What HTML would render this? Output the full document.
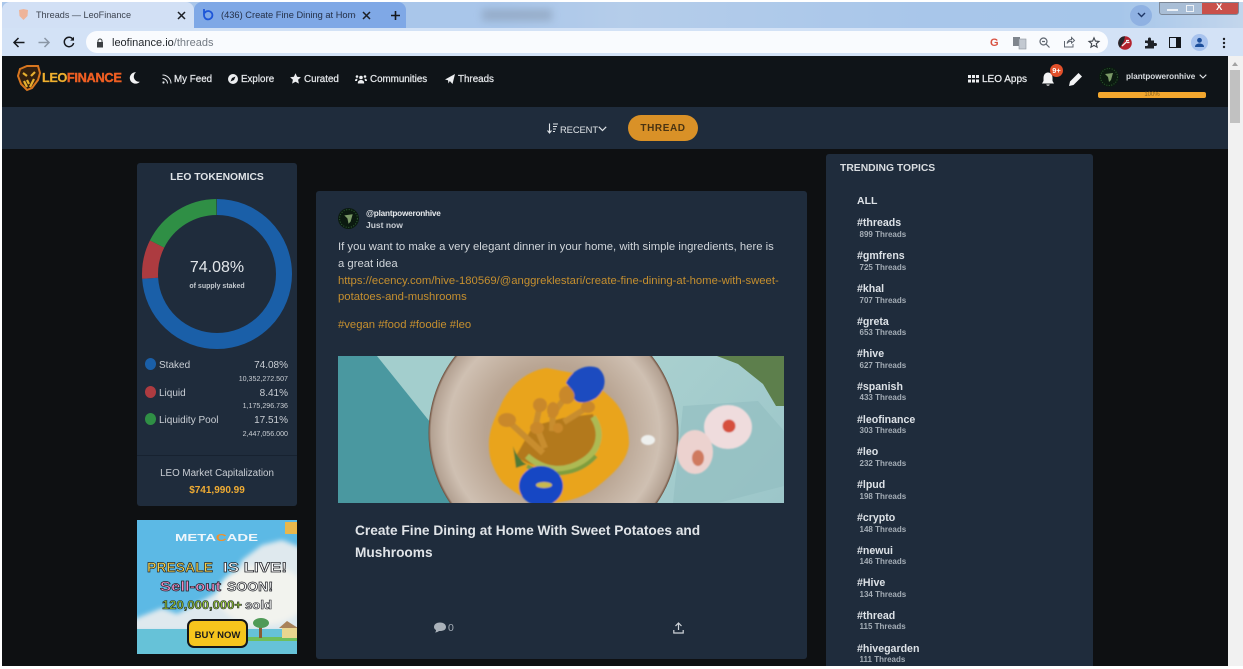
<!DOCTYPE html>
<html><head><meta charset="utf-8"><title>Threads — LeoFinance</title>
<style>
*{box-sizing:border-box}
html,body{margin:0;padding:0;width:1243px;height:669px;overflow:hidden;background:#fff}
body{font-family:"Liberation Sans",sans-serif;position:relative}
#w{position:absolute;left:0;top:0;width:1243px;height:669px;overflow:hidden;filter:blur(.3px)}
.a{position:absolute;white-space:nowrap}
.nav{top:72px;font-size:9.8px;color:#e4e7ea;line-height:14px;-webkit-text-stroke:.25px #e4e7ea;transform:translateY(1px)}
.tag{left:857px;font-size:10.6px;font-weight:bold;color:#dde2e7;line-height:14px;transform:translateY(1px)}
.cnt{left:859.5px;font-size:8px;font-weight:bold;color:#a4adb6;line-height:10px;transform:translateY(1px)}
.k{font-size:10px;color:#c9ced4;line-height:13px;transform:translateY(1px)}
.s{font-size:7.1px;color:#c9ced4;line-height:10px;text-align:right;right:955px;transform:translateY(1px)}
.body{left:338px;font-size:11.3px;line-height:16px;color:#d0d5da;transform:translateY(1px)}
.or{color:#c58f2f}
svg{position:absolute;overflow:visible}
</style></head><body><div id="w">

<!-- chrome tabs -->
<div class="a" style="left:2px;top:2px;width:1241px;height:26px;background:linear-gradient(90deg,#a9c6ea 0,#a9c6ea 40%,#b5cdea 50%,#a8c6ea 75%,#a6c6ea 90%,#c3d6ec 100%)"></div>
<div class="a" style="left:482px;top:9px;width:70px;height:12px;background:#8ea3bd;opacity:.7;filter:blur(4px)"></div>
<div class="a" style="left:2px;top:2px;width:192px;height:26px;background:#d2e0f5;border-radius:8px 8px 0 0"></div>
<div class="a" style="left:194px;top:2px;width:212px;height:26px;background:#7fa8e6;border-radius:8px 8px 0 0"></div>
<svg style="left:17px;top:8px" width="13" height="13" viewBox="0 0 13 13"><path d="M2 2 L6.5 1 L11 2 L10.5 8 L6.5 12 L2.500 8Z" fill="#eeb49a"/></svg>
<div class="a" style="left:36px;top:8px;font-size:9.1px;line-height:14px;color:#3c4350">Threads — LeoFinance</div>
<svg style="left:177px;top:11px" width="9" height="9" viewBox="0 0 9 9"><path d="M1 1L8 8M8 1L1 8" stroke="#1c2026" stroke-width="1.5"/></svg>
<svg style="left:201px;top:7px" width="14" height="14" viewBox="0 0 14 14"><path d="M3 2V8A4.200 4.200 0 1 0 7 4C5.500 4 4.500 4.800 3.500 6" fill="none" stroke="#1d55d8" stroke-width="1.800"/></svg>
<div class="a" style="left:221px;top:8px;width:135px;overflow:hidden;font-size:9.3px;line-height:14px;color:#243048">(436) Create Fine Dining at Home</div>
<svg style="left:362px;top:11px" width="9" height="9" viewBox="0 0 9 9"><path d="M1 1L8 8M8 1L1 8" stroke="#1c2026" stroke-width="1.500"/></svg>
<svg style="left:390px;top:10px" width="11" height="11" viewBox="0 0 11 11"><path d="M5.500 1V10M1 5.500H10" stroke="#15181d" stroke-width="1.600"/></svg>
<div class="a" style="left:1130px;top:5px;width:22px;height:21px;border-radius:50%;background:#8fb1e2"></div>
<svg style="left:1137px;top:12px" width="9" height="6" viewBox="0 0 9 6"><path d="M1 1L4.500 4.500L8 1" fill="none" stroke="#1f3767" stroke-width="1.400"/></svg>
<div class="a" style="left:1159px;top:2px;width:80px;height:13px;border:1px solid #7c8898;border-radius:0 0 3px 3px;background:linear-gradient(90deg,#a9bed6 0,#a9bed6 54%,#c9504a 54%,#c9504a 100%)"></div>
<div class="a" style="left:1167px;top:9px;width:11px;height:2px;background:#eef2f7"></div>
<div class="a" style="left:1186px;top:5px;width:8px;height:7px;border:1px solid #eef2f7"></div>
<div class="a" style="left:1216px;top:2px;font-size:9.500px;font-weight:bold;color:#fff;line-height:12px">X</div>

<!-- toolbar -->
<div class="a" style="left:2px;top:28px;width:1241px;height:28px;background:#d3e2f6"></div>
<div class="a" style="left:86px;top:31px;width:1022px;height:22px;background:#f9fbfe;border-radius:11px"></div>
<svg style="left:13px;top:37px" width="12" height="11" viewBox="0 0 12 11"><path d="M11.500 5.500H1.500M5.500 1L1 5.500L5.500 10" fill="none" stroke="#16191e" stroke-width="1.500"/></svg>
<svg style="left:38px;top:37px" width="12" height="11" viewBox="0 0 12 11"><path d="M.5 5.500H10.500M6.500 1L11 5.500L6.500 10" fill="none" stroke="#8b97a6" stroke-width="1.500"/></svg>
<svg style="left:63px;top:36px" width="12" height="12" viewBox="0 0 12 12"><path d="M10 3.500A4.700 4.700 0 1 0 10.600 7" fill="none" stroke="#16191e" stroke-width="1.500"/><path d="M11 .8V4.600H7.200Z" fill="#16191e"/></svg>
<svg style="left:96px;top:38px" width="8" height="10" viewBox="0 0 8 10"><path d="M2 4V3A2 2 0 0 1 6 3V4" fill="none" stroke="#3c4043"/><rect x="1" y="4" width="6" height="5.500" fill="#3c4043"/></svg>
<div class="a" style="left:112px;top:36px;font-size:11px;line-height:14px;color:#23272c">leofinance.io<span style="color:#737a83">/threads</span></div>
<div class="a" style="left:990px;top:36px;font-size:11px;font-weight:bold;line-height:14px;color:#d8503f">G</div>
<svg style="left:1013px;top:37px" width="13" height="12" viewBox="0 0 13 12"><rect x="0" y="0" width="7" height="9" fill="#7f858d"/><rect x="6" y="2" width="7" height="10" fill="#c3c9d1" stroke="#8d939b" stroke-width=".6"/></svg>
<svg style="left:1039px;top:37px" width="11" height="11" viewBox="0 0 11 11"><circle cx="4.500" cy="4.500" r="3.500" fill="none" stroke="#5f6670" stroke-width="1.200"/><path d="M7 7L10.500 10.500M3 4.500H6" stroke="#5f6670" stroke-width="1.200"/></svg>
<svg style="left:1063px;top:36px" width="12" height="12" viewBox="0 0 12 12"><path d="M1.500 5V11H10V8M4 7.500C4.500 5 6.500 3.500 8.500 3.500V1.500L11.500 4.500L8.500 7V5.300C6.500 5.300 5 6 4 7.500Z" fill="none" stroke="#5f6670"/></svg>
<svg style="left:1088px;top:37px" width="12" height="11" viewBox="0 0 12 11"><path d="M6 .8L7.400 4.100L11 4.400L8.300 6.700L9.100 10.200L6 8.400L2.900 10.200L3.700 6.700L1 4.400L4.600 4.100Z" fill="none" stroke="#3f454d" stroke-width="1.100"/></svg>
<svg style="left:1118px;top:36px" width="14" height="14" viewBox="0 0 14 14"><circle cx="7" cy="7" r="6.800" fill="#b3232e"/><path d="M7 .2A6.800 6.800 0 0 0 2 11.600L6 5Z" fill="#23262b"/><path d="M4 10L9 5.500M8 4.500H11M9 6.500H11.500" stroke="#f4f4f4" stroke-width="1.300"/></svg>
<svg style="left:1144px;top:37px" width="12" height="12" viewBox="0 0 12 12"><path d="M1 3.500H4V2A1.500 1.500 0 0 1 7 2V3.500H10V6H11.500A1.500 1.500 0 0 1 11.500 9H10V11.500H1V9H2.500A1.500 1.500 0 0 0 2.500 6H1Z" fill="#1e2228"/></svg>
<div class="a" style="left:1169px;top:37px;width:12px;height:11px;border:1.500px solid #14171b;border-right-width:5px"></div>
<div class="a" style="left:1191px;top:34px;width:17px;height:17px;border-radius:50%;background:#a8c3ee"></div>
<svg style="left:1194px;top:37px" width="11" height="11" viewBox="0 0 11 11"><circle cx="5.500" cy="3.300" r="2.400" fill="#1d4f9c"/><path d="M1 10C1 7.500 3 6.500 5.500 6.500S10 7.500 10 10Z" fill="#1d4f9c"/></svg>
<svg style="left:1222px;top:37px" width="4" height="12" viewBox="0 0 4 12"><circle cx="2" cy="2" r="1.200" fill="#1b1e23"/><circle cx="2" cy="6" r="1.200" fill="#1b1e23"/><circle cx="2" cy="10" r="1.200" fill="#1b1e23"/></svg>

<!-- page base -->
<div class="a" style="left:2px;top:56px;width:1226px;height:610px;background:#0e1012"></div>
<div class="a" style="left:2px;top:56px;width:1226px;height:51px;background:#0f1418"></div>
<div class="a" style="left:2px;top:107px;width:1226px;height:42px;background:#1f2c3c"></div>
<div class="a" style="left:1228px;top:56px;width:15px;height:610px;background:#f1f1f1"></div>
<div class="a" style="left:1230px;top:70px;width:10px;height:53px;background:#c1c1c1"></div>
<svg style="left:1232px;top:62px" width="6" height="4" viewBox="0 0 6 4"><path d="M3 0L6 4H0Z" fill="#a3a3a3"/></svg>

<!-- logo + nav -->
<svg style="left:16px;top:64px" width="25" height="27" viewBox="0 0 25 27"><path d="M4 5L11 2L22 2L24 9L22 16L16 24L11 26L5 20L2 12Z" fill="#33200f" stroke="#d8761f" stroke-width="2"/><path d="M7 9L11 12M19 8L15 12M11 16L13 20M8 17L11 23M18 15L14 23" stroke="#e7b02f" stroke-width="2.200"/></svg>
<div class="a" style="left:42px;top:70px;font-size:12.800px;font-weight:bold;line-height:16px;color:#f0b02e;letter-spacing:-.5px;-webkit-text-stroke:.2px #f0b02e">LEO<span style="color:#ee5e22;letter-spacing:-.3px;-webkit-text-stroke:.4px #ee5e22">FINANCE</span></div>
<svg style="left:130px;top:72px" width="10" height="12" viewBox="0 0 10 12"><path d="M6 .3A5.700 5.700 0 1 0 9.800 9.700A5.200 5.200 0 0 1 6 .3Z" fill="#f2f3f4"/></svg>
<svg style="left:162px;top:74px" width="10" height="10" viewBox="0 0 10 10"><circle cx="1.500" cy="8.500" r="1.100" fill="#e4e7ea"/><path d="M.5 4.500A5 5 0 0 1 5.500 9.500M.5 1A8.500 8.500 0 0 1 9 9.500" fill="none" stroke="#e4e7ea"/></svg>
<div class="a nav" style="left:174px">My Feed</div>
<svg style="left:228px;top:74px" width="10" height="10" viewBox="0 0 10 10"><circle cx="5" cy="5" r="5" fill="#eceef0"/><path d="M7.500 2.500L6 6L2.500 7.500L4 4Z" fill="#0f1418"/></svg>
<div class="a nav" style="left:241px">Explore</div>
<svg style="left:290px;top:73px" width="11" height="11" viewBox="0 0 11 11"><path d="M5.500 .3L7.100 3.800L10.900 4.200L8.100 6.800L8.900 10.600L5.500 8.700L2.100 10.600L2.900 6.800L.1 4.200L3.900 3.800Z" fill="#eceef0"/></svg>
<div class="a nav" style="left:304px">Curated</div>
<svg style="left:355px;top:74px" width="12" height="10" viewBox="0 0 12 10"><circle cx="6" cy="3.500" r="1.800" fill="#eceef0"/><circle cx="2" cy="2.500" r="1.300" fill="#eceef0"/><circle cx="10" cy="2.500" r="1.300" fill="#eceef0"/><path d="M2.800 9.500C2.800 7 4 6 6 6S9.200 7 9.200 9.500ZM0 7C0 5 1 4.500 2.500 4.800L2 7ZM12 7C12 5 11 4.500 9.500 4.800L10 7Z" fill="#eceef0"/></svg>
<div class="a nav" style="left:370px">Communities</div>
<svg style="left:445px;top:74px" width="10" height="10" viewBox="0 0 10 10"><path d="M10 0L7.500 10L4.800 7L3.500 9.500L3 6.200L0 5.500Z" fill="#eceef0"/></svg>
<div class="a nav" style="left:458px">Threads</div>

<!-- nav right -->
<svg style="left:968px;top:75px" width="11" height="8" viewBox="0 0 11 8"><path d="M0 0h3v3H0zM4 0h3v3H4zM8 0h3v3H8zM0 4.500h3v3H0zM4 4.500h3v3H4zM8 4.500h3v3H8z" fill="#eceef0"/></svg>
<div class="a nav" style="left:982px;font-size:10px;color:#eceef0">LEO Apps</div>
<svg style="left:1041px;top:72px" width="14" height="15" viewBox="0 0 14 15"><path d="M7 0.500C4 .5 2.500 3 2.500 6V9L1 11.500H13L11.500 9V6C11.500 3 10 .5 7 .5ZM5.200 12.500A1.900 1.900 0 0 0 8.800 12.500Z" fill="#f3f4f5"/></svg>
<div class="a" style="left:1050px;top:64px;width:13px;height:13px;border-radius:50%;background:#e2502a;color:#fff;font-size:7.500px;font-weight:bold;text-align:center;line-height:13px">9+</div>
<svg style="left:1069px;top:72px" width="14" height="14" viewBox="0 0 14 14"><path d="M0 14L1 9.500L9.500 1L13 4.500L4.500 13Z" fill="#f3f4f5"/></svg>
<svg style="left:1099px;top:67px" width="20" height="20" viewBox="0 0 20 20"><circle cx="10" cy="10" r="10" fill="#0b1a10"/><circle cx="10" cy="10" r="8.500" fill="none" stroke="#2c5a30" stroke-dasharray="1 1.500"/><path d="M6 7L14 6L12 13L10 15L9 10Z" fill="#7b9a67"/></svg>
<div class="a" style="left:1126px;top:70px;font-size:8.100px;font-weight:bold;line-height:13px;color:#d9dde1">plantpoweronhive</div>
<svg style="left:1199px;top:74px" width="8" height="5" viewBox="0 0 8 5"><path d="M.7 .7L4 4L7.300 .7" fill="none" stroke="#e4e7ea" stroke-width="1.100"/></svg>
<div class="a" style="left:1098px;top:92px;width:108px;height:6px;border-radius:2px;background:#f3a72e;color:#8a6420;font-size:6px;line-height:6px;text-align:center">100%</div>

<!-- sub bar -->
<svg style="left:547px;top:123px" width="11" height="11" viewBox="0 0 11 11"><path d="M2.500 .5V9.500M.5 7.500L2.500 10L4.500 7.500" fill="none" stroke="#dfe3e7" stroke-width="1.100"/><path d="M6 1H11M6 3.500H10M6 6H9M6 8.500H8" stroke="#dfe3e7"/></svg>
<div class="a" style="left:560px;top:123px;font-size:9.400px;line-height:14px;color:#dfe3e7;letter-spacing:-.1px">RECENT</div>
<svg style="left:598px;top:126px" width="9" height="6" viewBox="0 0 9 6"><path d="M.8 .8L4.500 4.500L8.200 .8" fill="none" stroke="#dfe3e7" stroke-width="1.200"/></svg>
<div class="a" style="left:628px;top:115px;width:70px;height:26px;border-radius:13px;background:#d99127;color:#4a3412;font-size:10px;font-weight:bold;text-align:center;line-height:28px;letter-spacing:.6px">THREAD</div>

<!-- tokenomics -->
<div class="a" style="left:137px;top:163px;width:160px;height:343px;background:#1f2c3c;border-radius:3px"></div>
<div class="a" style="left:137px;top:455px;width:160px;height:1px;background:#172230"></div>
<div class="a" style="left:137px;top:171px;width:160px;text-align:center;font-size:10.300px;font-weight:bold;line-height:14px;color:#dfe3e7">LEO TOKENOMICS</div>
<svg style="left:142px;top:199px" width="150" height="150" viewBox="0 0 150 150">
<g transform="rotate(-90 75 75)" fill="none" stroke-width="16">
<circle cx="75" cy="75" r="67" pathLength="100" stroke="#1a5fa8" stroke-dasharray="74.08 100"/>
<circle cx="75" cy="75" r="67" pathLength="100" stroke="#ad3b40" stroke-dasharray="8.41 100" stroke-dashoffset="-74.08"/>
<circle cx="75" cy="75" r="67" pathLength="100" stroke="#2f8f45" stroke-dasharray="17.51 100" stroke-dashoffset="-82.49"/>
</g></svg>
<div class="a" style="left:137px;top:258px;width:160px;text-align:center;font-size:16px;line-height:20px;color:#e2e6ea">74.08%</div>
<div class="a" style="left:137px;top:282px;width:160px;text-align:center;font-size:7px;font-weight:bold;line-height:10px;color:#c3c9cf">of supply staked</div>
<div class="a" style="left:145px;top:358px;width:11px;height:12px;border-radius:50%;background:#1a5fa8"></div>
<div class="a" style="left:145px;top:386px;width:11px;height:12px;border-radius:50%;background:#ad3b40"></div>
<div class="a" style="left:145px;top:413px;width:11px;height:12px;border-radius:50%;background:#2f8f45"></div>
<div class="a k" style="left:159px;top:358px">Staked</div>
<div class="a k" style="left:159px;top:386px">Liquid</div>
<div class="a k" style="left:159px;top:413px">Liquidity Pool</div>
<div class="a k" style="right:955px;top:358px">74.08%</div>
<div class="a k" style="right:955px;top:386px">8.41%</div>
<div class="a k" style="right:955px;top:413px">17.51%</div>
<div class="a s" style="top:373px">10,352,272.507</div>
<div class="a s" style="top:400px">1,175,296.736</div>
<div class="a s" style="top:428px">2,447,056.000</div>
<div class="a" style="left:137px;top:467px;width:160px;text-align:center;font-size:9.800px;line-height:13px;color:#c9ced4">LEO Market Capitalization</div>
<div class="a" style="left:137px;top:484px;width:160px;text-align:center;font-size:10px;font-weight:bold;line-height:13px;color:#f0ac33">$741,990.99</div>

<!-- ad -->
<svg style="left:137px;top:520px" width="160" height="134" viewBox="0 0 160 134" font-family="Liberation Sans, sans-serif" font-weight="bold">
<defs><clipPath id="ac"><rect width="160" height="134"/></clipPath><filter id="cb"><feGaussianBlur stdDeviation="2.500"/></filter></defs>
<g clip-path="url(#ac)">
<rect width="160" height="134" fill="#5cb9e5"/>
<g filter="url(#cb)">
<path d="M-5 100L25 88L40 94L70 78L95 62L105 40L125 25L145 20L165 28V112H-5Z" fill="#dfe9ee"/>
<ellipse cx="125" cy="75" rx="45" ry="30" fill="#f2f3ee"/>
</g>
<rect y="109" width="160" height="25" fill="#66c2d8"/>
<rect x="108" y="117" width="52" height="4" fill="#6fbf5c"/>
<rect x="145" y="108" width="15" height="10" fill="#e9d68f"/>
<path d="M142 108L150 101L161 108Z" fill="#a8825a"/>
<rect x="122" y="105" width="3" height="13" fill="#8a5b33"/>
<ellipse cx="124" cy="103" rx="8" ry="5" fill="#4f9a57"/>
<rect x="148" y="2" width="12" height="12" fill="#e8b74c"/>
<text x="38" y="21" textLength="83" lengthAdjust="spacingAndGlyphs" font-size="10.500" fill="#eef6fb">META<tspan fill="#f0902a">C</tspan>ADE</text>
<text x="10" y="52" textLength="66" lengthAdjust="spacingAndGlyphs" font-size="14" fill="#f5d34a" stroke="#23252a" stroke-width=".7">PRESALE</text>
<text x="86" y="52" textLength="64" lengthAdjust="spacingAndGlyphs" font-size="14" fill="#fff" stroke="#23252a" stroke-width=".7">IS LIVE!</text>
<text x="23" y="71" textLength="61" lengthAdjust="spacingAndGlyphs" font-size="14" fill="#f08cc5" stroke="#23252a" stroke-width=".7">Sell-out</text>
<text x="90" y="71" textLength="46" lengthAdjust="spacingAndGlyphs" font-size="13" fill="#fff" stroke="#23252a" stroke-width=".7">SOON!</text>
<text x="25" y="89" textLength="80" lengthAdjust="spacingAndGlyphs" font-size="11.500" fill="#9ad034" stroke="#23252a" stroke-width=".6">120,000,000+</text>
<text x="108" y="89" textLength="27" lengthAdjust="spacingAndGlyphs" font-size="11.500" fill="#fff" stroke="#23252a" stroke-width=".6">sold</text>
<rect x="51" y="100" width="59" height="27" rx="6" fill="#f6c51d" stroke="#15161a" stroke-width="2"/>
<text x="80.500" y="118" text-anchor="middle" font-size="9.500" fill="#1a1a1c">BUY NOW</text>
</g></svg>

<!-- post -->
<div class="a" style="left:316px;top:191px;width:491px;height:468px;background:#1f2c3c;border-radius:3px"></div>
<svg style="left:338px;top:208px" width="21" height="21" viewBox="0 0 20 20"><circle cx="10" cy="10" r="10" fill="#0b1a10"/><circle cx="10" cy="10" r="8.500" fill="none" stroke="#2c5a30" stroke-dasharray="1 1.500"/><path d="M6 7L14 6L12 13L10 15L9 10Z" fill="#7b9a67"/></svg>
<div class="a" style="left:366px;top:208px;font-size:8.200px;font-weight:bold;line-height:11px;color:#e6e9ec;letter-spacing:-.2px">@plantpoweronhive</div>
<div class="a" style="left:366px;top:220px;font-size:8.500px;font-weight:bold;line-height:11px;color:#c9ced4">Just now</div>
<div class="a body" style="top:238px">If you want to make a very elegant dinner in your home, with simple ingredients, here is</div>
<div class="a body" style="top:255px">a great idea</div>
<div class="a body or" style="top:272px">https://ecency.com/hive-180569/@anggreklestari/create-fine-dining-at-home-with-sweet-</div>
<div class="a body or" style="top:288px">potatoes-and-mushrooms</div>
<div class="a body or" style="top:316px">#vegan #food #foodie #leo</div>

<svg style="left:338px;top:356px" width="446" height="147" viewBox="0 0 446 147">
<defs>
<clipPath id="ic"><rect width="446" height="147"/></clipPath>
<radialGradient id="pl"><stop offset="0" stop-color="#a8907a"/><stop offset=".55" stop-color="#b9a593"/><stop offset=".85" stop-color="#cfc0b2"/><stop offset=".98" stop-color="#b3a192"/><stop offset="1" stop-color="#6a4a38"/></radialGradient>
<linearGradient id="fb" x1="0" y1="0" x2="1" y2="1"><stop offset="0" stop-color="#a9d0cf"/><stop offset="1" stop-color="#9cc6c9"/></linearGradient>
<filter id="bl"><feGaussianBlur stdDeviation=".9"/></filter>
</defs>
<g clip-path="url(#ic)">
<rect width="446" height="147" fill="#4a98a0"/>
<path d="M39 0L92 66L117 0Z" fill="#a3cecd"/>
<rect x="310" width="136" height="147" fill="url(#fb)"/>
<path d="M345 50L420 45L446 75V130L380 147H335Z" fill="#8fbcc0" opacity=".55"/>
<path d="M379 0H446V50L438 50L425 28L400 8Z" fill="#5d7f4c"/>
<circle cx="215.500" cy="77" r="125" fill="url(#pl)"/>
<g filter="url(#bl)">
<path d="M209 12C190 14 170 30 162 51C155 65 150 78 151 91C151 105 158 118 165 127C180 140 195 147 209 147C230 147 248 140 259 131C275 118 290 105 291 87C291 70 285 52 272 41C260 30 248 20 235 17Z" fill="#e9a41e"/>
<path d="M178 100C195 115 240 120 262 90L255 58L225 62L195 70Z" fill="#b3791f"/>
<path d="M175 90C178 100 186 108 189 108L178 112Z" fill="#4f7a34"/>
<path d="M189 100C205 114 225 118 245 105C260 96 266 78 255 61" fill="none" stroke="#adba52" stroke-width="6"/>
<path d="M189 110C210 122 240 120 258 100" fill="none" stroke="#7f9d3d" stroke-width="4"/>
<path d="M169 64L205 97M199 72L207 92M229 39L212 62M202 49L198 68M215 54L214 75M250 51L226 66" stroke="#c88d2e" stroke-width="6" fill="none"/>
<ellipse cx="169" cy="64" rx="9" ry="7" fill="#c9882a"/><ellipse cx="199" cy="72" rx="7" ry="6" fill="#c9882a"/><ellipse cx="229" cy="39" rx="8" ry="9" fill="#c9882a"/><ellipse cx="202" cy="49" rx="7" ry="7" fill="#c9882a"/><ellipse cx="215" cy="54" rx="6" ry="8" fill="#c9882a"/><ellipse cx="220" cy="72" rx="5" ry="5" fill="#c9882a"/><ellipse cx="250" cy="51" rx="7" ry="6" fill="#c9882a"/>
<path d="M228 27C235 12 250 8 260 12C270 20 268 34 258 42C248 48 238 48 236 42C238 36 232 32 228 27Z" fill="#1b4cc0"/>
<ellipse cx="203" cy="130" rx="22" ry="20" fill="#1647c4"/>
<ellipse cx="206" cy="129" rx="8" ry="3" fill="#c9b950"/>
<ellipse cx="390" cy="71" rx="24" ry="22" fill="#efdcdd"/><circle cx="391" cy="70" r="6.500" fill="#d6503e"/>
<ellipse cx="357" cy="96" rx="18" ry="22" fill="#ecd2cf"/><ellipse cx="360" cy="102" rx="6" ry="8" fill="#cf7a5f"/>
<ellipse cx="310" cy="84" rx="7" ry="5" fill="#eef0ee"/>
</g>
</g></svg>

<div class="a" style="left:355px;top:522px;font-size:13.700px;font-weight:bold;line-height:18px;color:#e0e4e8">Create Fine Dining at Home With Sweet Potatoes and</div>
<div class="a" style="left:355px;top:544px;font-size:13.700px;font-weight:bold;line-height:18px;color:#e0e4e8">Mushrooms</div>
<svg style="left:434px;top:622px" width="12" height="11" viewBox="0 0 12 11"><path d="M6 .5C9 .5 12 2 12 5S9 9 6 9L5 9C4 10 2 10.500 1 10.500C2 9.500 2 8.500 2 8C.5 7.300 0 6 0 5C0 2 3 .5 6 .5Z" fill="#aab2ba"/></svg>
<div class="a" style="left:448px;top:622px;font-size:10.500px;line-height:13px;color:#a4adb6">0</div>
<svg style="left:673px;top:622px" width="11" height="12" viewBox="0 0 11 12"><path d="M5.500 8V1M2.500 4L5.500 1L8.500 4M.8 8V11H10.200V8" fill="none" stroke="#cfd4d9" stroke-width="1.200"/></svg>

<!-- trending -->
<div class="a" style="left:826px;top:154px;width:267px;height:512px;background:#1f2c3c;border-radius:3px 3px 0 0"></div>
<div class="a" style="left:840px;top:162px;font-size:10.350px;font-weight:bold;line-height:14px;color:#d9dde1">TRENDING TOPICS</div>
<div class="a tag" style="top:193px;font-size:10.500px">ALL</div>
<div class="a tag" style="top:215px">#threads</div><div class="a cnt" style="top:229px">899 Threads</div>
<div class="a tag" style="top:248px">#gmfrens</div><div class="a cnt" style="top:262px">725 Threads</div>
<div class="a tag" style="top:281px">#khal</div><div class="a cnt" style="top:295px">707 Threads</div>
<div class="a tag" style="top:314px">#greta</div><div class="a cnt" style="top:327px">653 Threads</div>
<div class="a tag" style="top:346px">#hive</div><div class="a cnt" style="top:360px">627 Threads</div>
<div class="a tag" style="top:379px">#spanish</div><div class="a cnt" style="top:392px">433 Threads</div>
<div class="a tag" style="top:412px">#leofinance</div><div class="a cnt" style="top:425px">303 Threads</div>
<div class="a tag" style="top:444px">#leo</div><div class="a cnt" style="top:458px">232 Threads</div>
<div class="a tag" style="top:477px">#lpud</div><div class="a cnt" style="top:491px">198 Threads</div>
<div class="a tag" style="top:510px">#crypto</div><div class="a cnt" style="top:524px">148 Threads</div>
<div class="a tag" style="top:543px">#newui</div><div class="a cnt" style="top:556px">146 Threads</div>
<div class="a tag" style="top:575px">#Hive</div><div class="a cnt" style="top:589px">134 Threads</div>
<div class="a tag" style="top:608px">#thread</div><div class="a cnt" style="top:621px">115 Threads</div>
<div class="a tag" style="top:641px">#hivegarden</div><div class="a cnt" style="top:654px">111 Threads</div>
</div></body></html>
